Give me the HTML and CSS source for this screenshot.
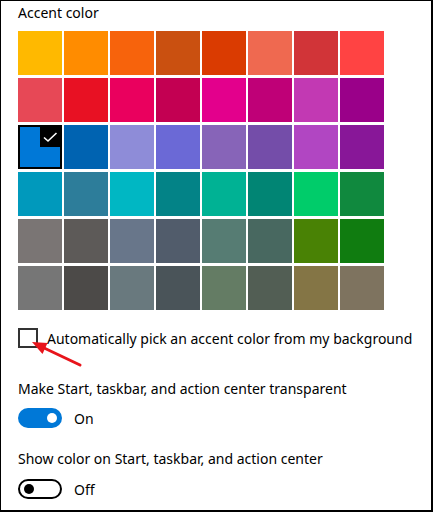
FILE: index.html
```html
<!DOCTYPE html>
<html>
<head>
<meta charset="utf-8">
<link rel="stylesheet" href="styles.css">
</head>
<body>
<div class="frame">
  <div class="title">Accent color</div>
  <div class="grid">
    <div class="sw" style="background:#FFB900"></div>
    <div class="sw" style="background:#FF8C00"></div>
    <div class="sw" style="background:#F7630C"></div>
    <div class="sw" style="background:#CA5010"></div>
    <div class="sw" style="background:#DA3B01"></div>
    <div class="sw" style="background:#EF6950"></div>
    <div class="sw" style="background:#D13438"></div>
    <div class="sw" style="background:#FF4343"></div>

    <div class="sw" style="background:#E74856"></div>
    <div class="sw" style="background:#E81123"></div>
    <div class="sw" style="background:#EA005E"></div>
    <div class="sw" style="background:#C30052"></div>
    <div class="sw" style="background:#E3008C"></div>
    <div class="sw" style="background:#BF0077"></div>
    <div class="sw" style="background:#C239B3"></div>
    <div class="sw" style="background:#9A0089"></div>

    <div class="sw selected" style="background:#0078D7">
      <span class="check"><svg width="20" height="20" viewBox="0 0 20 20"><polyline points="4,10.5 8,14 16.5,6" fill="none" stroke="#fff" stroke-width="1.6"/></svg></span>
    </div>
    <div class="sw" style="background:#0063B1"></div>
    <div class="sw" style="background:#8E8CD8"></div>
    <div class="sw" style="background:#6B69D6"></div>
    <div class="sw" style="background:#8764B8"></div>
    <div class="sw" style="background:#744DA9"></div>
    <div class="sw" style="background:#B146C2"></div>
    <div class="sw" style="background:#881798"></div>

    <div class="sw" style="background:#0099BC"></div>
    <div class="sw" style="background:#2D7D9A"></div>
    <div class="sw" style="background:#00B7C3"></div>
    <div class="sw" style="background:#038387"></div>
    <div class="sw" style="background:#00B294"></div>
    <div class="sw" style="background:#018574"></div>
    <div class="sw" style="background:#00CC6A"></div>
    <div class="sw" style="background:#10893E"></div>

    <div class="sw" style="background:#7A7574"></div>
    <div class="sw" style="background:#5D5A58"></div>
    <div class="sw" style="background:#68768A"></div>
    <div class="sw" style="background:#515C6B"></div>
    <div class="sw" style="background:#567C73"></div>
    <div class="sw" style="background:#486860"></div>
    <div class="sw" style="background:#498205"></div>
    <div class="sw" style="background:#107C10"></div>

    <div class="sw" style="background:#767676"></div>
    <div class="sw" style="background:#4C4A48"></div>
    <div class="sw" style="background:#69797E"></div>
    <div class="sw" style="background:#4A5459"></div>
    <div class="sw" style="background:#647C64"></div>
    <div class="sw" style="background:#525E54"></div>
    <div class="sw" style="background:#847545"></div>
    <div class="sw" style="background:#7E735F"></div>
  </div>

  <div class="checkrow">
    <span class="checkbox"></span>
    <span class="label">Automatically pick an accent color from my background</span>
  </div>

  <div class="setting first">Make Start, taskbar, and action center transparent</div>
  <div class="togglerow">
    <span class="toggle on"><span class="knob"></span></span>
    <span class="state">On</span>
  </div>

  <div class="setting second">Show color on Start, taskbar, and action center</div>
  <div class="togglerow">
    <span class="toggle off"><span class="knob"></span></span>
    <span class="state">Off</span>
  </div>

  <svg class="arrow" width="100" height="40" viewBox="20 335 100 40">
    <line x1="80" y1="365" x2="42" y2="347" stroke="#E8141B" stroke-width="3" stroke-linecap="round"/>
    <polygon points="32,342 42.5,354 47.5,343" fill="#E8141B"/>
  </svg>
</div>
</body>
</html>
```
FILE: styles.css
```css
html, body {
  margin: 0;
  padding: 0;
  background: #fff;
}
.frame {
  position: relative;
  width: 433px;
  height: 512px;
  box-sizing: border-box;
  border: 1px solid #000;
  border-right-width: 2px;
  border-bottom-width: 2px;
  padding: 2px 0 0 17px;
  font-family: "Noto Sans", "Open Sans", sans-serif;
  font-size: 14px;
  line-height: 20px;
  color: #000;
  white-space: nowrap;
  display: flex;
  flex-direction: column;
  align-items: flex-start;
}
.title {
  height: 20px;
}
.grid {
  margin-top: 8px;
  display: grid;
  grid-template-columns: repeat(8, 44px);
  grid-auto-rows: 44px;
  column-gap: 2px;
  row-gap: 3px;
}
.sw {
  position: relative;
  width: 44px;
  height: 44px;
}
.sw.selected {
  box-shadow: inset 0 0 0 2px #000;
}
.check {
  position: absolute;
  top: 2px;
  right: 2px;
  width: 20px;
  height: 20px;
  background: #000;
}
.check svg {
  display: block;
}
.checkrow {
  margin-top: 18px;
  display: flex;
  align-items: center;
  height: 20px;
}
.label {
  padding-top: 1px;
}
.checkbox {
  flex: none;
  width: 20px;
  height: 20px;
  box-sizing: border-box;
  border: 2px solid #333;
  margin-right: 9px;
}
.setting.first {
  margin-top: 31px;
}
.setting.second {
  margin-top: 21px;
}
.togglerow {
  margin-top: 9px;
  display: flex;
  align-items: center;
  height: 20px;
}
.setting.second + .togglerow {
  margin-top: 10px;
}
.state {
  padding-top: 1px;
}
.toggle {
  flex: none;
  width: 44px;
  height: 20px;
  box-sizing: border-box;
  border-radius: 10px;
  display: flex;
  align-items: center;
  margin-right: 12px;
}
.toggle.on {
  background: #0078D7;
  justify-content: flex-end;
  padding-right: 5px;
}
.toggle.on .knob {
  width: 10px;
  height: 10px;
  border-radius: 50%;
  background: #fff;
}
.toggle.off {
  border: 2px solid #000;
  padding-left: 4px;
}
.toggle.off .knob {
  width: 10px;
  height: 10px;
  border-radius: 50%;
  background: #000;
}
.arrow {
  position: absolute;
  left: 19px;
  top: 334px;
}
```
